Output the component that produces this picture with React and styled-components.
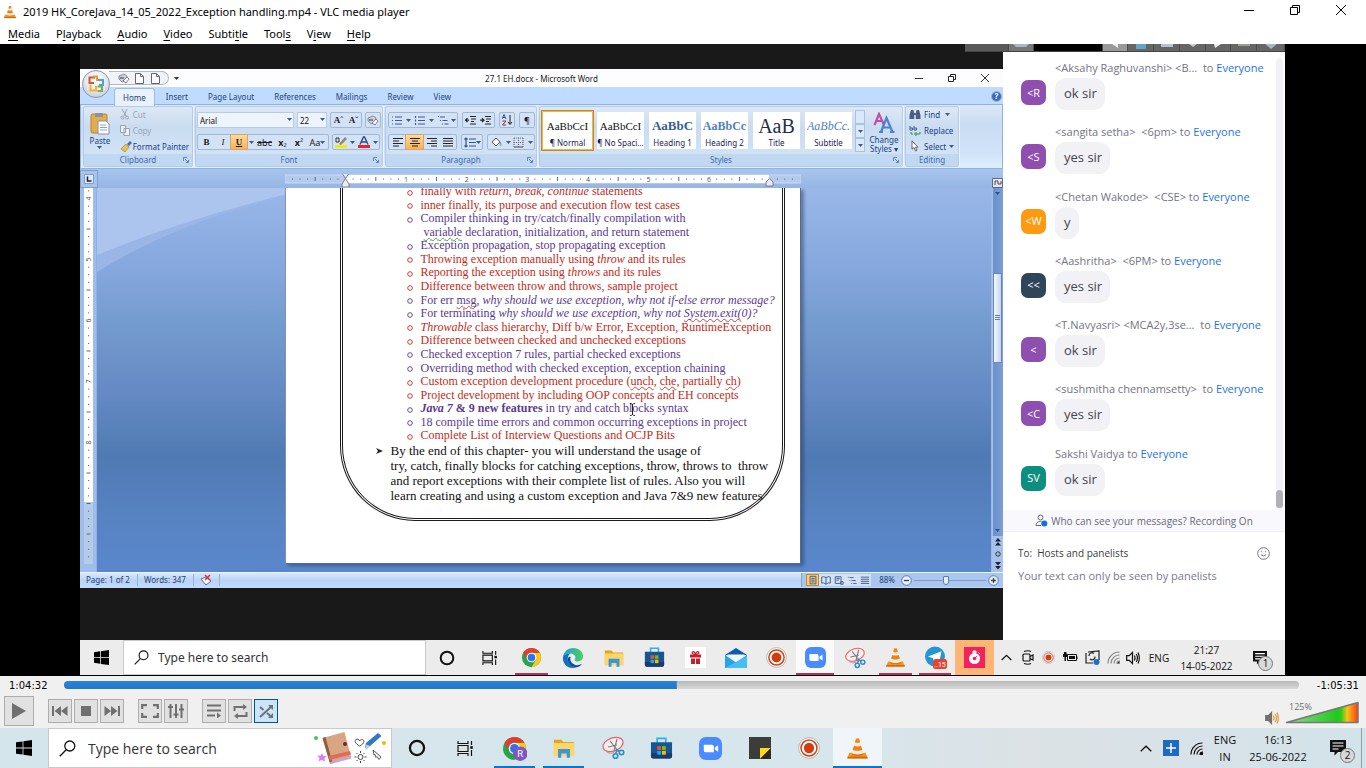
import React from 'react';
import styled, { createGlobalStyle, css } from 'styled-components';

const UI = '"Open Sans", "Noto Sans", sans-serif';
const WIDE_UI = '"Noto Sans", "Open Sans", sans-serif';
const SERIF = '"Liberation Serif", "Times New Roman", serif';
const PLAYED = 3872;
const DURATION = 7803;

const Global = createGlobalStyle`
  *, *::before, *::after { box-sizing: border-box; }
  html, body { margin: 0; padding: 0; }
  body { font-family: ${UI}; color: #000; background: #000; }
  button, input, select, textarea { font: inherit; color: inherit; margin: 0; padding: 0; border: 0; background: none; border-radius: 0; }
  button { display: inline-flex; align-items: center; justify-content: center; }
  h1, p, ul, ol { margin: 0; padding: 0; font: inherit; list-style: none; }
  a { text-decoration: none; color: inherit; }
  svg { display: block; flex: none; }
`;

/* ---------- Shell ---------- */
const Shell = styled.div`
  display: flex; flex-direction: column; min-height: 100vh;
`;
const TitleBar = styled.header`
  display: flex; align-items: center; height: 23px; padding: 0 2px 0 3px; gap: 6px; background: #fff; font-family: ${WIDE_UI}; font-size: 11px;
`;
const AppTitle = styled.h1`flex: 1; white-space: nowrap;`;
const WindowButton = styled.button`width: 46px; height: 23px; padding-bottom: 4px;`;
const MenuBar = styled.nav`
  display: flex; height: 21px; align-items: center; padding-left: 8px; gap: 16px; background: #fff; font-family: ${WIDE_UI}; font-size: 11px;
  u { text-underline-offset: 2px; }
`;

/* ---------- Video stage ---------- */
const Stage = styled.main`
  flex: 1; display: flex; flex-direction: column; margin: 0 81px 1px 80px; position: relative; background: #191919;
`;
const StageBody = styled.div`flex: 1; display: flex; min-height: 0;`;
const WordColumn = styled.section`
  flex: 1; min-width: 0; display: flex; flex-direction: column; padding: 25px 0 52px; font-family: ${WIDE_UI};
`;
const MeetingStrip = styled.div`
  position: absolute; top: 0; right: 0; height: 8px; width: 320px; display: flex; background: #606060; overflow: hidden;
  border-bottom: 1px solid #444;
`;
const StripCell = styled.div`
  width: ${(p) => p.w}px; background: ${(p) => p.bg || '#666'}; border-right: 1px solid #4c4c4c;
  display: flex; justify-content: center; align-items: flex-start;
`;

/* ---------- Word ---------- */
const WordTitle = styled.div`
  position: relative; display: flex; align-items: center; justify-content: center; height: 18px; background: #fdfdff; font-size: 8px; color: #222;
`;
const WordControls = styled.div`
  position: absolute; right: 2px; top: 0; display: flex;
  button { width: 33px; height: 17px; }
`;
const OfficeButton = styled.button`
  position: absolute; left: 2px; top: 1px; width: 28px; height: 28px; border-radius: 50%; z-index: 2;
  background: radial-gradient(circle at 50% 35%, #fff 0, #e8ecf3 45%, #b6c0d0 100%); border: 1px solid #8b97ab;
`;
const QuickAccess = styled.div`
  position: absolute; left: 29px; top: 2px; height: 14px; width: 60px; padding-left: 8px; display: flex; align-items: center; gap: 3px;
  border: 1px solid #b3b9c6; border-left: 0; border-radius: 0 8px 8px 0; background: #f1f3f8;
  button { width: 13px; height: 12px; }
`;
const QuickMore = styled.button`position: absolute; left: 92px; top: 3px; width: 8px; height: 12px;`;
const TabRow = styled.div`
  display: flex; height: 18px; padding-left: 33px; background: #bfdbff; font-size: 8px; color: #1d4480; border-bottom: 1px solid #8db2e3;
`;
const Tab = styled.button`
  padding: 0 10px; height: 18px; position: relative;
  ${(p) => p.$active && css`background: #e9f1fb; border: 1px solid #9bbce6; border-bottom: 0; border-radius: 3px 3px 0 0; margin: 1px 1px 0; padding: 0 8px;`}
`;
const HelpButton = styled.button`margin-left: auto; width: 14px; height: 18px;`;
const Ribbon = styled.div`
  display: flex; gap: 2px; height: 64px; padding: 1px 2px; background: linear-gradient(#dce8f6, #c9dcf3 30%, #cfe2f7 75%, #dcf0ff);
  border: 1px solid #8db2e3; border-top: 0; font-size: 8px; color: #15428b;
`;
const Group = styled.section`
  width: ${(p) => p.w}px; display: flex; flex-direction: column; border: 1px solid #b4cbe8; border-radius: 2px;
  box-shadow: 1px 0 0 #eef5fd; background: linear-gradient(#dde8f5, #cadcf1 35%, #d5e5f7);
`;
const GroupBody = styled.div`
  flex: 1; display: flex; flex-direction: ${(p) => (p.$col ? 'column' : 'row')}; padding: ${(p) => p.pad || '3px'}; gap: ${(p) => p.gap || 0}px;
`;
const GroupLabel = styled.div`
  height: 12px; line-height: 12px; text-align: center; background: #c0d8f1; color: #3e6aaa; position: relative;
  svg { position: absolute; right: 3px; top: 3px; }
`;
const BigButton = styled.button`
  width: ${(p) => p.w}px; flex-direction: column; line-height: 9px; gap: 1px;
`;
const Stack = styled.div`display: flex; flex-direction: column; justify-content: space-around; flex: 1;`;
const LineButton = styled.button`
  justify-content: flex-start; gap: ${(p) => p.gap || 3}px; height: 15px; white-space: nowrap; color: ${(p) => (p.$dim ? '#98a3b5' : '#15428b')};
`;
const ToolRow = styled.div`display: flex; align-items: center; gap: ${(p) => p.gap || 4}px; height: 16px;`;
const ToolBox = styled.div`
  display: flex; height: 16px; border: 1px solid #9fb9dc; border-radius: 2px; background: #d3e2f4;
`;
const Tool = styled.button`
  flex: none; width: ${(p) => p.w || 16}px; height: 14px; font-size: 9px; color: #1b1b2b; font-family: ${(p) => (p.$serif ? SERIF : 'inherit')};
  ${(p) => p.$on && css`background: linear-gradient(#fcd9a0, #fbb252); outline: 1px solid #d8a768;`}
`;
const Combo = styled.select`
  appearance: none; width: ${(p) => p.w}px; height: 16px; background: #eef4fb; border: 1px solid #b7cbe6; padding-left: 2px; color: #111;
`;
const ComboWrap = styled.label`
  position: relative; display: flex; font-size: 8px;
  svg { position: absolute; right: 2px; top: 6px; }
`;
const StyleCard = styled.button`
  width: ${(p) => (p.$on ? 53 : 47)}px; height: ${(p) => (p.$on ? 41 : 37)}px; flex: none; background: #fff; flex-direction: column; overflow: hidden;
  border: ${(p) => (p.$on ? '2px solid #f0b840' : '0')}; outline: ${(p) => (p.$on ? '1px solid #c28a30' : '0')}; outline-offset: -1px;
  margin: ${(p) => (p.$on ? '0 -2px 0 0' : '2px 0 0')};
`;
const Sample = styled.span`
  height: 24px; line-height: 24px; font-family: ${SERIF}; white-space: nowrap; max-width: 45px; overflow: hidden; flex: none;
  font-size: ${(p) => p.size || 11}px; color: ${(p) => p.c || '#111'}; font-weight: ${(p) => (p.$b ? 700 : 400)}; font-style: ${(p) => (p.$i ? 'italic' : 'normal')};
`;
const StyleName = styled.span`line-height: 10px; color: #1c1c58; white-space: nowrap;`;
const GalleryScroll = styled.div`
  display: flex; flex-direction: column; width: 10px; height: 42px; margin: 0 -2px;
  button { flex: 1; border: 1px solid #a9c1e2; background: #dbe8f7; }
`;

const RulerStrip = styled.div`
  display: flex; align-items: center; height: 19px; background: linear-gradient(#a9c5ee, #96b5e3); flex: none;
`;
const TabStop = styled.button`width: 18px; height: 18px; border: 1px solid #7f9fd0; background: #a9c3ea;`;
const RulerCenter = styled.div`flex: 1; display: flex; justify-content: center; padding: 3px 3px 0 0;`;
const RulerToggle = styled.button`width: 12px; height: 18px; align-items: flex-end;`;

const Workspace = styled.div`flex: 1; display: flex; min-height: 0;`;
const SideRuler = styled.div`
  width: 17px; background: #9fbdec; padding-left: 4px; overflow: hidden; border-right: 1px solid #8fb0e4;
`;
const Canvas = styled.div`
  flex: 1; position: relative; display: flex; justify-content: center; overflow: hidden; padding-right: 3px;
  background: linear-gradient(#9ab7e8, #82a5dc 24%, #769dd0 33%, #6489c3 54%, #507ab3 70%, #5884c4 88%, #5a87cc);
`;
const Swoosh = styled.svg`position: absolute; left: 0; top: 0;`;
const Paper = styled.article`
  position: relative; width: 516px; margin-bottom: 8px; padding: 0 15px 42px 54px; background: #fff; display: flex; flex-direction: column;
  border: 1px solid #5a6b88; border-top: 0; border-left-color: #7f92b4; box-shadow: 3px 2px 3px rgba(30, 50, 90, 0.45);
`;
const Frame = styled.div`
  flex: 1; border: 3px double #1c1c1c; border-top: 0; border-radius: 0 0 75px 75px; font-family: ${SERIF};
`;
const Topics = styled.ul`
  display: grid; grid-template-rows: repeat(19, 1fr); height: 258px; margin-top: -3px; padding-left: 64px; font-size: 12px; line-height: 13px;
`;
const Topic = styled.li`
  display: flex; min-height: 0; color: ${(p) => (p.$red ? '#c62a20' : '#5c3a8c')}; white-space: pre;
`;
const Bullet = styled.span`width: ${(p) => (p.$blank ? 17 : 14)}px; height: 13px; display: flex; align-items: center; padding-top: 2px;`;
const Squiggle = styled.span`text-decoration: underline wavy ${(p) => p.c || '#d04040'} 1px; text-underline-offset: 1px; text-decoration-skip-ink: none;`;
const Closing = styled.div`
  display: flex; padding-left: 33px; font-size: 13px; line-height: 15px; white-space: pre; color: #111;
  svg { margin: 4px 7px 0 0; }
`;
const IBeam = styled.svg`position: absolute; left: 343px; top: 215px;`;

const WordScroll = styled.div`
  width: 12px; background: #a5c1ee; display: flex; flex-direction: column; align-items: center; padding: 0 1px; border-left: 1px solid #9ab8e8;
`;
const WordTrack = styled.div`
  flex: 1; width: 10px; background: linear-gradient(90deg, #6a8fca, #7c9fd6); display: flex; flex-direction: column; justify-content: space-between; align-items: center; padding: 4px 0;
`;
const WordThumb = styled.div`
  width: 9px; height: 90px; margin-bottom: 88px; border: 1px solid #6d87b4; border-radius: 1px; background: linear-gradient(90deg, #f4f8fe, #c4d4ee);
  display: flex; align-items: center; justify-content: center;
`;
const Jump = styled.button`height: 12px; width: 10px;`;
const StatusBar = styled.footer`
  display: flex; align-items: center; height: 16px; flex: none; font-size: 8px; color: #1c3f78; padding: 0 0 1px 6px;
  background: linear-gradient(#d9e8fb, #b9d3f7 50%, #c3dafa); border-top: 1px solid #eaf3ff;
`;
const StatusItem = styled.span`padding-right: 7px; margin-right: 6px; border-right: 1px solid #93b2dd; line-height: 12px;`;
const StatusRight = styled.div`
  margin-left: auto; display: flex; align-items: center; height: 14px; padding: 0 4px; gap: 2px; background: #a9c6ee; border-left: 1px solid #7fa3d6;
`;
const ViewButton = styled.button`
  width: 13px; height: 12px; background: ${(p) => (p.$on ? '#fbc877' : '#d3e2f6')}; border: ${(p) => (p.$on ? '1px solid #c68a33' : '0')};
`;
const ViewGroup = styled.div`display: flex;`;
const ZoomLabel = styled.span`padding: 0 4px 0 6px; line-height: 12px;`;
const ZoomRange = styled.input`
  appearance: none; width: 72px; height: 12px; background: linear-gradient(#7f9cc8, #7f9cc8) center / 100% 1px no-repeat;
  &::-webkit-slider-thumb { appearance: none; width: 6px; height: 9px; background: #e4edf9; border: 1px solid #5b7cae; border-radius: 1px 1px 3px 3px; }
`;

/* ---------- Chat ---------- */
const Chat = styled.aside`
  width: 282px; flex: none; display: flex; flex-direction: column; background: #fff; margin-top: 7px; color: #6e6e7e;
`;
const Feed = styled.div`flex: 1; display: flex; padding: 9px 2px 0 18px; min-height: 0; justify-content: space-between;`;
const Messages = styled.ol`display: grid; grid-auto-rows: 1fr;`;
const Message = styled.li`display: grid; grid-template-columns: 34px auto; grid-template-rows: 17px 33px; white-space: pre;`;
const Sender = styled.p`
  grid-column: 2; font-size: 11px; line-height: 16px; color: #747484;
  a { color: #1b74e4; }
`;
const Avatar = styled.span`
  width: 25px; height: 25px; margin-top: 3px; padding-bottom: 1px; border-radius: 7px; display: flex; align-items: center; justify-content: center; color: #fff; font-size: 11px;
  background: ${(p) => p.bg};
`;
const Bubble = styled.p`
  justify-self: start; height: 32px; margin-top: 1px; padding: 0 8px 0 9px; border-radius: 11px; background: #f1f1f6; color: #44444c; font-size: 13px; line-height: 31px;
`;
const ChatTrack = styled.div`
  width: 7px; margin-top: -2px; border-radius: 4px; background: #f1f1f6; display: flex; align-items: flex-end; padding-bottom: 2px;
`;
const ChatThumb = styled.div`width: 7px; height: 18px; border-radius: 4px; background: #b0b0b8;`;
const Notice = styled.div`
  height: 22px; display: flex; align-items: center; justify-content: center; gap: 3px; background: #f8f8fd; border-bottom: 1px solid #ececf4; font-size: 10px; color: #6a6a78;
`;
const Compose = styled.form`height: 108px; padding: 12px 15px 0; display: flex; flex-direction: column; gap: 6px;`;
const ComposeHead = styled.div`
  display: flex; align-items: center; gap: 5px; height: 18px; font-size: 10px; color: #3b3b46;
  button { margin-left: auto; }
`;
const ComposeText = styled.textarea`
  resize: none; height: 60px; outline: 0; font-size: 11px; line-height: 16px; overflow: hidden;
  &::placeholder { color: #7a7a8a; opacity: 1; }
`;

/* ---------- Recorded taskbar ---------- */
const InnerTaskbar = styled.div`
  height: 35px; flex: none; display: flex; align-items: stretch; background: #ececec; padding-right: 4px;
`;
const Slot = styled.button`
  position: relative; flex: none; width: ${(p) => p.w}px; background: ${(p) => p.bg || 'transparent'};
  &::after { content: ''; display: ${(p) => (p.line ? 'block' : 'none')}; position: absolute; left: ${(p) => p.inset || 0}px; right: ${(p) => p.inset || 0}px; bottom: 0; height: 2px; background: ${(p) => p.line}; }
`;
const SearchBox = styled.label`
  display: flex; align-items: center; gap: ${(p) => p.gap}px; width: ${(p) => p.w}px; padding: 0 4px 0 10px; background: #fff; border: 1px solid #c9c9c9;
  font-family: ${(p) => p.face || UI};
  input { flex: 1; min-width: 0; outline: 0; font-size: ${(p) => p.size}px; }
  input::placeholder { color: #333; opacity: 1; }
`;
const Tray = styled.div`
  margin-left: auto; display: flex; align-items: center; font-size: ${(p) => p.size}px; color: #111; text-align: center; white-space: nowrap;
`;
const TrayItem = styled.button`width: ${(p) => p.w}px; height: 100%; position: relative; flex: none; line-height: ${(p) => p.lh || 16}px;`;
const Badge = styled.span`
  position: absolute; left: ${(p) => p.x}px; top: ${(p) => p.y}px; width: 15px; height: 15px; border-radius: 50%; background: #d9d9d9; border: 1px solid #777;
  font-size: 10px; line-height: 13px; text-align: center;
`;

/* ---------- Player controls ---------- */
const Player = styled.section`height: 52px; flex: none; background: #f0f0f0;`;
const SeekRow = styled.div`
  display: flex; align-items: center; height: 18px; padding: 0 7px 0 9px; font-family: "DejaVu Sans", sans-serif; font-size: 10px;
`;
const Seek = styled.input`
  appearance: none; flex: 1; min-width: 0; height: 8px; margin: 0 18px 0 16px; border-radius: 4px;
  background: linear-gradient(#2a84d8, #2277c8) left / ${(PLAYED / DURATION) * 100}% 100% no-repeat, linear-gradient(#b8b8b8, #d8d8d8);
  &::-webkit-slider-thumb { appearance: none; width: 0; height: 0; }
`;
const ControlRow = styled.div`display: flex; align-items: center; height: 34px; padding: 0 6px 0 4px; gap: 14px;`;
const ControlSet = styled.div`display: flex; gap: 2px;`;
const Control = styled.button`
  width: ${(p) => p.$size || 24}px; height: ${(p) => p.$size || 24}px; background: ${(p) => (p.$on ? '#cce4f7' : '#e1e1e1')}; border: 1px solid ${(p) => (p.$on ? '#005499' : '#adadad')};
`;
const Volume = styled.div`margin-left: auto; display: flex; align-items: flex-end; gap: 6px; position: relative; height: 28px;`;
const VolumeText = styled.span`position: absolute; left: 24px; top: 4px; font-size: 9px; color: #707070; line-height: 12px;`;

/* ---------- Desktop taskbar ---------- */
const Taskbar = styled.footer`
  height: 40px; flex: none; display: flex; align-items: stretch; padding-right: 4px;
  background: linear-gradient(90deg, #d5e5ec, #d6e6ec 60%, #dce2e6 75%, #d3e3ea);
`;
const ShowDesktop = styled.button`width: 1px; height: 40px; background: #8fa2aa;`;

/* ---------- Icons ---------- */
const Cone = ({ s = 24 }) => (
  <svg width={s} height={s} viewBox="0 0 24 24">
    <path d="M3.500 16.500h17l2 5.600h-21z" fill="#f7931a" />
    <path d="M1.500 20.500h21v2h-21z" fill="#d66a00" />
    <path d="M10.400 1.500h3.200L18.500 18c-2 2.500-11 2.500-13 0z" fill="#efeae4" />
    <path d="M10.400 1.500h3.200l1.100 4c-1.200.9-4.200.9-5.400 0z" fill="#f08a12" />
    <path d="M8.300 9c1.900 1.100 5.500 1.100 7.400 0l1.300 4.200c-2.300 1.500-7.700 1.500-10 0z" fill="#ee8110" />
    <path d="M6 16.800c2.800 2 9.200 2 12 0l.5 1.500c-2 2.300-11 2.300-13 0z" fill="#e07407" />
  </svg>
);
const WinLogo = ({ s = 16 }) => (
  <svg width={s} height={s} viewBox="0 0 16 16"><path d="M0 2.300 6.600 1.400v6.200H0zM7.400 1.300 16 0v7.600H7.400zM0 8.400h6.600v6.200L0 13.700zM7.400 8.400H16V16l-8.600-1.200z" /></svg>
);
const Lens = ({ s = 17 }) => (
  <svg width={s} height={s} viewBox="0 0 17 17" fill="none" stroke="#111" strokeWidth="1.300"><circle cx="10.800" cy="6" r="5" /><path d="M7.200 9.700.8 16.200" /></svg>
);
const Ring = ({ s = 16 }) => (
  <svg width={s} height={s} viewBox="0 0 16 16"><circle cx="8" cy="8" r="6.300" fill="none" stroke="#111" strokeWidth="2" /></svg>
);
const TaskView = ({ s = 17 }) => (
  <svg width={s} height={s} viewBox="0 0 17 17" fill="none" stroke="#111" strokeWidth="1.200"><path d="M1 1v2.500h10V1M1 16v-2.500h10V16M1 5.500h10v6H1zM14.500 1v4M14.500 10v6" /><path d="M13.200 6.200h2.600v2.600h-2.600z" fill="#111" stroke="none" /></svg>
);
const Chrome = ({ s = 22, user }) => (
  <svg width={s} height={s} viewBox="0 0 24 24">
    <circle cx="12" cy="12" r="11" fill="#2ba24c" />
    <path d="M12 6.500h9.500A11 11 0 0 1 12 23l4.800-8.200z" fill="#fbc81a" />
    <path d="M2.500 6.500A11 11 0 0 1 21.500 6.500H12a5.500 5.500 0 0 0-4.800 8.200z" fill="#e23e30" />
    <circle cx="12" cy="12" r="5.500" fill="#fff" /><circle cx="12" cy="12" r="4.300" fill="#2c74e8" />
    {user && <><circle cx="17.500" cy="17" r="7" fill="#7e57c2" /><text x="17.500" y="20.300" fontSize="9" fill="#fff" textAnchor="middle" fontFamily="Roboto">R</text></>}
  </svg>
);
const Edge = () => (
  <svg width="22" height="22" viewBox="0 0 24 24">
    <defs><linearGradient id="eg" x1="0" x2="1"><stop offset="0" stopColor="#1b9de2" /><stop offset="1" stopColor="#4fd05a" /></linearGradient></defs>
    <path d="M1 11C2 4.500 7 1 12.500 1 18.500 1 23 5.300 23 10.200c0 3.400-2.600 5.600-5.700 5.600-2.300 0-3.500-.9-3.500-1.700 0-.7.900-1.100.9-2.800C14.700 9 12 7 8.800 7 5.500 7 2.600 8.700 1 11z" fill="url(#eg)" />
    <path d="M1 11C2.600 8 6.500 6.600 9.500 7.200 6.500 8.500 6 12 6.500 14.500c.8 4 4.600 7.600 9.500 7.300C14.500 22.700 13 23 11.500 23 5.500 23 .5 18 1 11z" fill="#0f6fc6" />
    <path d="M9.500 11c-1.500 3 .5 7.500 5 8.600 2.500.6 5.500 0 7.300-1.300-1 2-3.300 3.500-5.800 3.700-5 .3-9-3.500-9.600-7.500-.3-2.500 1-4.500 3.100-3.500z" fill="#0b4a94" />
  </svg>
);
const Folder = ({ s = 22 }) => (
  <svg width={s} height={s} viewBox="0 0 24 24"><path d="M1 3h8l2 2.500h12V20H1z" fill="#e6a417" /><path d="M1 6.500h22V21H1z" fill="#fcd667" /><path d="M5.500 13h13v9.500h-3.500V18H9v4.500H5.500z" fill="#3b95d9" /></svg>
);
const Store = ({ s = 22 }) => (
  <svg width={s} height={s} viewBox="0 0 24 24"><path d="M7.500 6V1.500h9V6" fill="none" stroke="#28b1ec" strokeWidth="1.800" /><path d="M1 5.500h22V20a2.500 2.500 0 0 1-2.500 2.500h-17A2.500 2.500 0 0 1 1 20z" fill="#175595" /><path d="M1 17h22v3a2.500 2.500 0 0 1-2.500 2.500h-17A2.500 2.500 0 0 1 1 20z" fill="#1a3c6b" /><path d="M7.500 9.500h4v4h-4z" fill="#f25022" /><path d="M12.500 9.500h4v4h-4z" fill="#7fba00" /><path d="M7.500 14.500h4v4h-4z" fill="#19a7ee" /><path d="M12.500 14.500h4v4h-4z" fill="#ffb900" /></svg>
);
const Gift = () => (
  <svg width="21" height="21" viewBox="0 0 21 21"><path fill="#fff" d="M0 0h21v21H0z" /><path d="M5 7.500h11v3H5zM6 11.500h4V17H6zM11 11.500h4V17h-4z" fill="#c2202b" /><path d="M10.500 7.500C8 7.500 6.500 6 7.500 5s2.500 0 3 2.500c.5-2.500 2-3.500 3-2.500s-.5 2.500-3 2.500z" fill="none" stroke="#c2202b" strokeWidth="1.300" /></svg>
);
const Mail = () => (
  <svg width="22" height="20" viewBox="0 0 22 20"><path d="M0 7 11 0l11 7z" fill="#0c5fae" /><path d="M2.500 6.500h17L11 14z" fill="#f4f8fb" /><path d="M0 7l11 7.500L22 7v13H0z" fill="#28a3e8" /><path d="M0 20 22 8v12z" fill="#47bdf5" /></svg>
);
const Rec = ({ s = 22 }) => (
  <svg width={s} height={s} viewBox="0 0 24 24"><circle cx="12" cy="12" r="11.300" fill="#fff" stroke="#ab9a92" strokeWidth=".8" /><circle cx="12" cy="12" r="8.700" fill="none" stroke="#c34a20" strokeWidth="1.700" /><circle cx="12" cy="12" r="5.600" fill="#d13d10" /></svg>
);
const Zoom = ({ s = 22 }) => (
  <svg width={s} height={s} viewBox="0 0 24 24"><rect width="24" height="24" rx="7" fill="#4a8cff" /><path d="M5 8h8.500a2 2 0 0 1 2 2v6H7a2 2 0 0 1-2-2zM16.500 11l3.500-2.500v7L16.500 13z" fill="#fff" /></svg>
);
const Snip = ({ s = 24 }) => (
  <svg width={s} height={s} viewBox="0 0 24 24" fill="none"><ellipse cx="12" cy="8.500" rx="10.500" ry="6.500" transform="rotate(-20 12 8.500)" stroke="#e06666" strokeWidth="1.200" fill="#f7eeee" /><path d="M4 14c2 3 6 4 9 2.500" stroke="#d98080" /><path d="m9 5 8 10M16 3l-3 12M7 11l9-2" stroke="#7d7d86" strokeWidth="1.200" /><circle cx="14.500" cy="20" r="2.300" stroke="#2c8bc8" strokeWidth="1.600" /><circle cx="20.500" cy="16.500" r="2.200" stroke="#2c8bc8" strokeWidth="1.600" /><path d="m14.800 17.500 1-3.500 3 1.500" stroke="#2c8bc8" strokeWidth="1.600" /></svg>
);
const Telegram = () => (
  <svg width="23" height="23" viewBox="0 0 23 23"><circle cx="11" cy="10.500" r="10" fill="#2596d4" /><path d="m4 10.500 13.500-5.300-2.300 11-3.700-2.600-2 1.900-.5-3.200z" fill="#fff" /><rect x="9" y="13" width="14" height="10" rx="2.500" fill="#e8432e" /><text x="16" y="20.800" fontSize="7" fill="#fff" textAnchor="middle" fontFamily="Roboto">..15</text></svg>
);
const PinkClock = () => (
  <svg width="21" height="21" viewBox="0 0 21 21"><path d="M0 0h21v21H0z" fill="#f5205f" /><circle cx="10.500" cy="11.500" r="5.500" fill="#fff" /><path d="M9 4h3v2H9zM14.500 5.500l1.500 1.500" fill="#fff" stroke="#fff" /><circle cx="10.500" cy="11.500" r="1.800" fill="#f5205f" /><path d="m10.500 11.500 2.700-2.500" stroke="#f5205f" /></svg>
);
const Note = () => (
  <svg width="22" height="22" viewBox="0 0 22 22"><path d="M0 0h22v22H0z" fill="#3c3c3a" /><path d="M11 11h11L11 22z" fill="#ffd91a" /><path d="M22 11v11H11z" fill="#2a2a28" /></svg>
);
const Chevron = ({ s = 12 }) => (
  <svg width={s} height="7" viewBox="0 0 12 7" fill="none" stroke="#111" strokeWidth="1.300"><path d="m.7 6.200 5.300-5 5.300 5" /></svg>
);
const Wifi = ({ c = '#111' }) => (
  <svg width="13" height="13" viewBox="0 0 13 13" fill="none" stroke={c} strokeWidth="1.200"><path d="M1 12.500C1 6 6 1 12.500 1M4 12.500C4 7.500 8 4 12.500 4M7 12.500C7 9.500 9.500 7 12.500 7" /><path d="M10 12.500C10 11 11 10 12.500 10v2.500z" fill="#111" /></svg>
);
const Speech = ({ s = 16 }) => (
  <svg width={s} height={s} viewBox="0 0 16 16"><path d="M0 0h16v12h-8l-3.500 3.500V12H0z" fill="#111" /><path d="M2.500 3h11M2.500 6h11M2.500 9h6" stroke="#fff" strokeWidth="1.200" /></svg>
);
const Speaker = ({ c = '#111', w = '#111' }) => (
  <svg width="14" height="14" viewBox="0 0 14 14" fill="none" stroke={w} strokeWidth="1.200"><path d="M.7 4.700h2.500L6.500 1.500v11L3.200 9.300H.7z" stroke={c} fill={c === '#111' ? 'none' : c} /><path d="M8.300 4.500q1.500 2.500 0 5M10.200 3q2.500 4 0 8M12 1.500q2.600 5.500 0 11" /></svg>
);
const Camera = () => (
  <svg width="12" height="15" viewBox="0 0 12 15" fill="none" stroke="#111" strokeWidth="1.200"><rect x="1" y="4" width="7" height="7" rx="1" /><path d="m8 6.500 3-1.500v5L8 8.500M2 1.500q4-1.500 7 0M2 13.500q4 1.500 7 0" /></svg>
);
const Battery = () => (
  <svg width="15" height="11" viewBox="0 0 15 11"><path d="M4.500 2.500h9v6h-9zM14 4.500v2.500" fill="none" stroke="#111" /><path d="M6 4h6v3H6zM1 0v2H0v3h1.500v4H3V5h1.500V2H3.500V0z" fill="#111" /></svg>
);
const Sync = () => (
  <svg width="15" height="15" viewBox="0 0 15 15" fill="none" stroke="#222" strokeWidth="1.200"><path d="M3 2 14 1v9M1 3v10h7" /><path d="M9 3.500a3 3 0 0 0-5 2.500M5 9a3 3 0 0 0 5-2.500" /><circle cx="11.500" cy="12" r="3" fill="#1e6fd0" stroke="none" /></svg>
);
const Notebook = () => (
  <svg width="74" height="34" viewBox="0 0 74 34">
    <circle cx="3" cy="7" r="2" fill="#43c463" /><circle cx="71" cy="12" r="2" fill="#fbb40f" />
    <path d="M9 22l1.300 3 3.500.2-2.400 2.100.5 3.200L9 29l-3.300 1.300.8-3.200-2.300-2.300 3.500-.2z" fill="#df7df0" />
    <path d="m9.500 7 22-6 6.500 25-21 6.500z" fill="#d9a684" /><path d="m9.500 7 3-1 7 26-2.500.5z" fill="#8f5d41" /><path d="m15.500 25 21.500-5 1 3.500L16.500 29z" fill="#e06b5c" /><path d="m17 31 21-5.500.5 2L18 33z" fill="#c9a0e4" /><circle cx="32" cy="13" r="2" fill="#6b2f1f" />
    <path d="m52 17 1-5L65 2l3.500 3L57 15z" fill="#2f78c8" /><path d="m52.500 19.500.5-6 4.500 1.500z" fill="#c3cfdb" />
    <path d="M46.500 15c-4-2.500-5.500-5-3.500-6.500 1.500-1 3 0 3.500 1.500 1-1.500 3-2 4-.7 1.300 1.700-.5 4-4 5.700z" fill="#fff" stroke="#444" />
    <circle cx="47.500" cy="26" r="2.500" fill="none" stroke="#444" /><path d="M47.500 20v2M47.500 30v2M41.500 26h2M51.500 26h2M43.500 22l1 1M51.500 22l-1 1M43.500 30l1-1M51.500 30l-1-1" stroke="#444" />
    <path d="m60 19 8 7-2 2.500-2-3-1 1-1-3-1 .5z" fill="#fff" stroke="#555" />
  </svg>
);
const Arrow = ({ c = '#3a5a8c' }) => <svg width="5" height="3" viewBox="0 0 5 3"><path d="M0 0h5L2.500 3z" fill={c} /></svg>;
const Launcher = () => <svg width="6" height="6" viewBox="0 0 6 6" fill="none" stroke="#6585b5"><path d="M.5 4V.5H4M2 2l3.500 3.500M5.500 3v2.500H3" /></svg>;
const LinesIcon = ({ kind, c = '#222', w = 12 }) => {
  const paths = {
    bullets: 'M4 2h7M4 5.500h7M4 9h7M1 2h1M1 5.500h1M1 9h1',
    numbers: 'M4 2h7M4 5.500h7M4 9h7M1.500 1v2M1.500 4.500v2M1.500 8v2',
    multi: 'M1 1.500h1M3 2h5M3 5.500h1M5.500 5.500h5M5 9h1M7.500 9h4',
    left: 'M1 1.500h10M1 4h6M1 6.500h10M1 9h6',
    center: 'M1 1.500h10M3 4h6M1 6.500h10M3 9h6',
    right: 'M1 1.500h10M5 4h6M1 6.500h10M5 9h6',
    justify: 'M1 1.500h10M1 4h10M1 6.500h10M1 9h10',
    outdent: 'M5 1.500h6M6 4h5M6 6.500h3M5 9h6M4 5.200H.5M2.500 3.200l-2 2 2 2',
    indent: 'M5 1.500h6M6 4h5M6 6.500h3M5 9h6M0 5.200h3.500M2 3.200l2 2-2 2',
    spacing: 'M5 2h7M5 5.500h7M5 9h7M2 1v9M.5 2.500 2 1l1.500 1.500M.5 8.500 2 10l1.500-1.500',
    borders: 'M1 1h9M1 5.500h9M5.500 1v9M1 1v9M10 1v9',
    page: 'M2.500.500h7v9h-7zM4 3h4M4 5h4M4 7h4',
    book: 'M6 2v8M6 2Q3 0 .8 1.500v7Q3 7.500 6 10M6 2q3-2 5.200-.5v7Q9 7.500 6 10',
    web: 'M1.500 1h7v8h-7zM3 3h4M3 5h3M8 7h3v3H8z',
  };
  return <svg width={w} height="11" viewBox="0 0 12 11" fill="none" stroke={c} strokeWidth="1.200" strokeDasharray={kind === 'borders' ? '1 1' : undefined}><path d={paths[kind]} />{kind === 'borders' && <path d="M1 10h9" strokeDasharray="none" />}</svg>;
};
const OfficeLogo = () => (
  <svg width="18" height="18" viewBox="0 0 18 18" fill="none" strokeWidth="2"><path d="M8 2.500H2.500V8H7" stroke="#d9532a" /><path d="M5.500 1.500H10V6" stroke="#f09a2c" /><path d="M11 5h5v5h-4" stroke="#5a9ae0" /><path d="M3.500 10v5.500H9V11" stroke="#f2b42e" /><path d="M10.500 16H15v-4.500h-4.500" stroke="#78b24a" /></svg>
);
const Spell = () => <svg width="12" height="11" viewBox="0 0 12 11"><path d="M1 3 6 1l3 2-1 4-4 2-3-3z" fill="#ccd2de" stroke="#667" strokeWidth=".7" /><path d="m5 8 4-4 2 2-3 4z" fill="#f7f7f7" stroke="#556" strokeWidth=".7" /><path d="M2 5h4" stroke="#334" /></svg>;
const Doc = () => <svg width="9" height="11" viewBox="0 0 9 11"><path d="M.5.500h5l3 3v7h-8z" fill="#fff" stroke="#667" /><path d="M5.500.5v3h3" fill="none" stroke="#667" /></svg>;
const PasteIcon = () => <svg width="20" height="23" viewBox="0 0 20 23"><rect x="1" y="2" width="16" height="19" rx="1.500" fill="#e6ac4c" stroke="#b98330" /><path d="M5 1h8v4H5z" fill="#8c93a0" /><path d="M8 9h8l3 3v10H8z" fill="#fff" stroke="#8592ad" /><path d="M10 13h6M10 15.500h7M10 18h7" stroke="#8ba3cc" /></svg>;
const Scissors = () => <svg width="10" height="11" viewBox="0 0 10 11" fill="none" stroke="#98a3b5"><path d="m2 0 4 7M7 0 4 7" /><circle cx="2.500" cy="8.500" r="1.500" /><circle cx="7" cy="8.500" r="1.500" /></svg>;
const CopyIcon = () => <svg width="10" height="11" viewBox="0 0 10 11" fill="#eef2f8" stroke="#98a3b5"><path d="M.5.500h5v7h-5zM4 3.500h5.500v7H4z" /></svg>;
const Brush = () => <svg width="12" height="11" viewBox="0 0 12 11"><path d="m7 3 3-3 2 2-3 3z" fill="#4a6ea8" /><path d="M1 8 6 3l3 3-4 5z" fill="#e9c14e" stroke="#9a7b25" strokeWidth=".6" /></svg>;
const ChangeA = () => <svg width="22" height="22" viewBox="0 0 22 22" fill="none" strokeWidth="2.200"><path d="M1.500 13 6 2l5 11M3.500 9h6" stroke="#c1509c" /><path d="m8 20 5.500-14L19.500 20M10 15.500h8M6 20h4M17 20h4.500" stroke="#4a83cf" /></svg>;
const Binoc = () => <svg width="12" height="11" viewBox="0 0 12 11" fill="#4b5f86"><path d="M2 1h2.500l.7 4v5H.5V6zM7.500 1H10l1.500 5v4H6.800V5zM5 4h2v2H5z" /></svg>;
const Swap = () => <svg width="12" height="11" viewBox="0 0 12 11" fill="none" stroke="#44608f"><path d="M1 1v4h2.500V3H1M5 1v4h2.500V3H5" /><path d="M6 10V8h2v2zM10 10V8h2M2 7v2h2" stroke="#3c9142" /></svg>;
const Pointer = () => <svg width="12" height="12" viewBox="0 0 12 12"><path d="M3 .8v8.400l2-1.700L6.500 11 8 10.300 6.500 7.200H9z" fill="#fff" stroke="#445" strokeWidth=".8" /></svg>;
const Person = () => (
  <svg width="13" height="13" viewBox="0 0 13 13"><circle cx="5.500" cy="3.500" r="2.500" fill="none" stroke="#6a6a78" /><path d="M1 11.500q0-4 4.500-4h1M1 11.500h5" fill="none" stroke="#6a6a78" /><circle cx="9.300" cy="9.500" r="3" fill="#0e71eb" /></svg>
);
const Smile = () => (
  <svg width="13" height="13" viewBox="0 0 13 13" fill="none" stroke="#747487"><circle cx="6.500" cy="6.500" r="5.800" /><path d="M3.800 7.500q2.700 3 5.400 0" /><path d="M4.500 4.300v1M8.500 4.300v1" strokeWidth="1.300" /></svg>
);

const HorizontalRuler = () => {
  const step = 60.6;
  const marks = [];
  for (let i = -7; i <= 59; i += 1) {
    const x = 60.5 + (i * step) / 8;
    if (x < 2 || x > 512 || i === 0) continue;
    if (i % 8 === 0 && i / 8 < 7) marks.push(<text key={i} x={x} y="8" fontSize="7" fill="#555" textAnchor="middle" fontFamily="Open Sans">{i / 8}</text>);
    else if (i % 8 === 0) continue;
    else if (i % 4 === 0) marks.push(<path key={i} d={`M${x} 3v4`} stroke="#667" strokeWidth="1" />);
    else marks.push(<path key={i} d={`M${x} 4.500v1.200`} stroke="#667" strokeWidth="1" />);
  }
  return (
    <svg width="516" height="13" viewBox="0 0 516 13">
      <path d="M0 1h516v8H0z" fill="#b4cbec" stroke="#c8daf5" /><path d="M60 1h424v8H60z" fill="#fff" />
      {marks}
      <path d="M57 -1h7l-3.500 5.500L64 10v3h-7v-3l3.500-5.500z" fill="#e8ecf3" stroke="#667" strokeWidth=".8" />
      <path d="M481 12V8l3.500-3.500L488 8v4z" fill="#e8ecf3" stroke="#667" strokeWidth=".8" />
    </svg>
  );
};
const VerticalRuler = () => {
  const marks = [];
  for (let i = -1; i <= 48; i += 1) {
    const y = 10.500 + (i * 61) / 8;
    if (y < 2) continue;
    if (i % 8 === 0 && i / 8 < 5) marks.push(<text key={i} x="4.500" y={y + 2.500} fontSize="7" fill="#555" textAnchor="middle" fontFamily="Open Sans" transform={`rotate(-90 4.500 ${y})`}>{4 + i / 8}</text>);
    else if (i % 4 === 0) marks.push(<path key={i} d={`M2.500 ${y}h4`} stroke="#667" />);
    else marks.push(<path key={i} d={`M4 ${y}h1.200`} stroke="#667" />);
  }
  return (
    <svg width="9" height="376" viewBox="0 0 9 376"><path d="M0 0h9v376H0z" fill="#b4cbec" /><path d="M0 0h9v314H0z" fill="#fff" />{marks}</svg>
  );
};

/* ---------- Data ---------- */
const menus = [['', 'M', 'edia'], ['P', 'l', 'ayback'], ['', 'A', 'udio'], ['', 'V', 'ideo'], ['Subti', 't', 'le'], ['Tool', 's', ''], ['V', 'i', 'ew'], ['', 'H', 'elp']];
const topics = [
  [1, <>finally with <i>return, break, continue</i> statements</>],
  [1, 'inner finally, its purpose and execution flow test cases'],
  [0, 'Compiler thinking in try/catch/finally compilation with'],
  [0, <><Squiggle c="#4a9a4a">variable</Squiggle> declaration, initialization, and return statement</>, true],
  [0, 'Exception propagation, stop propagating exception'],
  [1, <>Throwing exception manually using <i>throw</i> and its rules</>],
  [1, <>Reporting the exception using <i>throws</i> and its rules</>],
  [1, 'Difference between throw and throws, sample project'],
  [0, <>For err <Squiggle>msg</Squiggle>, <i>why should we use exception, why not if-else error message?</i></>],
  [0, <>For terminating <i>why should we use exception, why not <Squiggle>System.exit(</Squiggle>0)?</i></>],
  [1, <><i>Throwable</i> class hierarchy, Diff b/w Error, Exception, RuntimeException</>],
  [1, 'Difference between checked and unchecked exceptions'],
  [0, 'Checked exception 7 rules, partial checked exceptions'],
  [0, 'Overriding method with checked exception, exception chaining'],
  [1, <>Custom exception development procedure (<Squiggle>unch</Squiggle>, <Squiggle>che</Squiggle>, partially <Squiggle>ch</Squiggle>)</>],
  [1, 'Project development by including OOP concepts and EH concepts'],
  [0, <><b><i>Java 7</i> &amp; 9 new features</b> in try and catch blocks syntax</>],
  [0, '18 compile time errors and common occurring exceptions in project'],
  [1, 'Complete List of Interview Questions and OCJP Bits'],
];
const chat = [
  ['<R', '#8e4fae', '<Aksahy Raghuvanshi> <B...  to ', 'ok sir'],
  ['<S', '#8e4fae', '<sangita setha>  <6pm> to ', 'yes sir'],
  ['<W', '#fd9a0f', '<Chetan Wakode>  <CSE> to ', 'y'],
  ['<<', '#2f455c', '<Aashritha>  <6PM> to ', 'yes sir'],
  ['<', '#8e4fae', '<T.Navyasri> <MCA2y,3se...  to ', 'ok sir'],
  ['<C', '#8e4fae', '<sushmitha chennamsetty>  to ', 'yes sir'],
  ['SV', '#0c8f80', 'Sakshi Vaidya to ', 'ok sir'],
];
const styleCards = [
  { name: '¶ Normal', text: 'AaBbCcI', on: true },
  { name: '¶ No Spaci...', text: 'AaBbCcI' },
  { name: 'Heading 1', text: 'AaBbC', c: '#365f91', b: true, size: 13 },
  { name: 'Heading 2', text: 'AaBbCc', c: '#4f81bd', b: true, size: 12 },
  { name: 'Title', text: 'AaB', size: 20, c: '#1f2f48' },
  { name: 'Subtitle', text: 'AaBbCc.', c: '#4f81bd', i: true, size: 12 },
];

const WordRibbon = () => (
  <Ribbon>
    <Group w={110}>
      <GroupBody pad="0 3px" gap={7}>
        <BigButton w={30}><PasteIcon />Paste<Arrow /></BigButton>
        <Stack>
          <LineButton $dim><Scissors />Cut</LineButton>
          <LineButton $dim><CopyIcon />Copy</LineButton>
          <LineButton gap={1}><Brush />Format Painter</LineButton>
        </Stack>
      </GroupBody>
      <GroupLabel>Clipboard<Launcher /></GroupLabel>
    </Group>
    <Group w={188}>
      <GroupBody $col pad="5px 1px 0" gap={6}>
        <ToolRow gap={3}>
          <ComboWrap><Combo w={97} aria-label="Font"><option>Arial</option></Combo><Arrow /></ComboWrap>
          <ComboWrap><Combo w={30} aria-label="Font size"><option>22</option></Combo><Arrow /></ComboWrap>
          <ToolBox><Tool w={15} $serif><b>A</b>ˆ</Tool><Tool w={15} $serif><b>A</b>ˇ</Tool></ToolBox>
          <ToolBox><Tool w={14}><Spell /></Tool></ToolBox>
        </ToolRow>
        <ToolRow gap={3}>
          <ToolBox>
            <Tool w={17} $serif><b>B</b></Tool><Tool w={16} $serif><i>I</i></Tool><Tool w={16} $on $serif><b><u>U</u></b></Tool><Tool w={8}><Arrow /></Tool>
            <Tool w={19}><s>abc</s></Tool><Tool w={17}><b>x</b>₂</Tool><Tool w={16}><b>x</b>²</Tool><Tool w={21}>Aa<Arrow /></Tool>
          </ToolBox>
          <ToolBox>
            <Tool w={15}><svg width="12" height="12" viewBox="0 0 12 12"><path d="M0 9h12v3H0z" fill="#f2ea18" /><path d="m4 8 6-7 2 2-6 6z" fill="#8f8a6a" /><path d="M1 2h3v4H1z" fill="none" stroke="#333" /></svg></Tool><Tool w={8}><Arrow /></Tool>
            <Tool w={15}><svg width="12" height="12" viewBox="0 0 12 12"><path d="M0 9h12v3H0z" fill="#ee2222" /><path d="M2 8.500 5.500 1h1L10 8.500M3.500 6h5" fill="none" stroke="#274a86" strokeWidth="1.400" /></svg></Tool><Tool w={8}><Arrow /></Tool>
          </ToolBox>
        </ToolRow>
      </GroupBody>
      <GroupLabel>Font<Launcher /></GroupLabel>
    </Group>
    <Group w={152}>
      <GroupBody $col pad="5px 2px 0" gap={6}>
        <ToolRow>
          <ToolBox><Tool w={15}><LinesIcon kind="bullets" c="#3f5c91" /></Tool><Tool w={8}><Arrow /></Tool><Tool w={15}><LinesIcon kind="numbers" c="#3f5c91" /></Tool><Tool w={8}><Arrow /></Tool><Tool w={15}><LinesIcon kind="multi" c="#3f5c91" /></Tool><Tool w={7}><Arrow /></Tool></ToolBox>
          <ToolBox><Tool w={15}><LinesIcon kind="outdent" /></Tool><Tool w={16}><LinesIcon kind="indent" /></Tool></ToolBox>
          <ToolBox><Tool w={14}><svg width="11" height="12" viewBox="0 0 11 12" fill="none"><path d="m0 5 2-4.500L4 5M.8 3.500h2.500" stroke="#2a56b0" /><path d="M.5 7H4L.5 11H4" stroke="#9a3030" /><path d="M8 1v9M6 8l2 2.500L10 8" stroke="#222" /></svg></Tool></ToolBox>
          <ToolBox><Tool w={14}>¶</Tool></ToolBox>
        </ToolRow>
        <ToolRow>
          <ToolBox><Tool w={17}><LinesIcon kind="left" /></Tool><Tool w={17} $on><LinesIcon kind="center" /></Tool><Tool w={17}><LinesIcon kind="right" /></Tool><Tool w={16}><LinesIcon kind="justify" /></Tool></ToolBox>
          <ToolBox><Tool w={20}><LinesIcon kind="spacing" c="#34558f" /><Arrow /></Tool></ToolBox>
          <ToolBox><Tool w={16}><svg width="12" height="12" viewBox="0 0 12 12"><path d="m2 6 4-4 4 4-4 4z" fill="#fff" stroke="#556" /><path d="M10 6q2 3 0 4" stroke="#4a7ac0" fill="none" /></svg></Tool><Tool w={8}><Arrow /></Tool><Tool w={14}><LinesIcon kind="borders" c="#667" /></Tool><Tool w={8}><Arrow /></Tool></ToolBox>
        </ToolRow>
      </GroupBody>
      <GroupLabel>Paragraph<Launcher /></GroupLabel>
    </Group>
    <Group w={364}>
      <GroupBody pad="3px 1px 0" gap={5}>
        {styleCards.map((s) => (
          <StyleCard key={s.name} $on={s.on}>
            <Sample size={s.size} c={s.c} $b={s.b} $i={s.i}>{s.text}</Sample>
            <StyleName>{s.name}</StyleName>
          </StyleCard>
        ))}
        <GalleryScroll><button aria-label="Up" /><button aria-label="Down"><Arrow /></button><button aria-label="More"><Arrow /></button></GalleryScroll>
        <BigButton w={32}><ChangeA /><span>Change Styles&nbsp;▾</span></BigButton>
      </GroupBody>
      <GroupLabel>Styles<Launcher /></GroupLabel>
    </Group>
    <Group w={54}>
      <GroupBody pad="0 3px">
        <Stack>
          <LineButton><Binoc />Find&nbsp;<Arrow /></LineButton>
          <LineButton><Swap />Replace</LineButton>
          <LineButton><Pointer />Select <Arrow /></LineButton>
        </Stack>
      </GroupBody>
      <GroupLabel>Editing</GroupLabel>
    </Group>
  </Ribbon>
);

const Word = () => (
  <WordColumn>
    <WordTitle>
      <OfficeButton aria-label="Office"><OfficeLogo /></OfficeButton>
      <QuickAccess><button aria-label="Spelling"><Spell /></button><button aria-label="New"><Doc /></button><button aria-label="Open"><Doc /></button></QuickAccess>
      <QuickMore aria-label="Customize"><Arrow c="#333" /></QuickMore>
      27.1 EH.docx - Microsoft Word
      <WordControls>
        <button aria-label="Minimize"><svg width="8" height="8"><path d="M0 4.500h8" stroke="#333" /></svg></button>
        <button aria-label="Restore"><svg width="8" height="8" fill="none" stroke="#222"><path d="M.5 2.500h5v5h-5zM2.500 2V.5h5v5H6" /></svg></button>
        <button aria-label="Close"><svg width="8" height="8" stroke="#333"><path d="m0 0 8 8M8 0 0 8" /></svg></button>
      </WordControls>
    </WordTitle>
    <TabRow>
      <Tab $active>Home</Tab>
      {['Insert', 'Page Layout', 'References', 'Mailings', 'Review', 'View'].map((t) => <Tab key={t}>{t}</Tab>)}
      <HelpButton aria-label="Help"><svg width="11" height="11" viewBox="0 0 11 11"><circle cx="5.500" cy="5.500" r="5" fill="#3a6ab8" stroke="#9fb8e0" /><text x="5.500" y="8.300" fontSize="8" fontWeight="700" fill="#fff" textAnchor="middle">?</text></svg></HelpButton>
    </TabRow>
    <WordRibbon />
    <RulerStrip>
      <TabStop aria-label="Tab stop"><svg width="10" height="10"><path d="M.5.500h9v9h-9z" fill="#dce8f8" stroke="#7f9fd0" /><path d="M3.500 2.500v4.500h4" stroke="#222" strokeWidth="1.500" fill="none" /></svg></TabStop>
      <RulerCenter><HorizontalRuler /></RulerCenter>
      <RulerToggle aria-label="View ruler"><svg width="11" height="10"><path d="M.5.500h10v9H.5z" fill="#e3e9f4" stroke="#667" /><path d="M3 7V3h3v3h3V3" fill="none" stroke="#445" /></svg></RulerToggle>
    </RulerStrip>
    <Workspace>
      <SideRuler><VerticalRuler /></SideRuler>
      <Canvas>
        <Swoosh width="190" height="90" viewBox="0 0 190 90">
          <path d="M0 0h190v8Q80 34 0 84z" fill="#9ab6e6" /><path d="M0 0h190v6Q85 32 0 67z" fill="#abc5ef" />
        </Swoosh>
        <Paper>
          <Frame>
            <Topics>
              {topics.map(([red, text, cont], i) => (
                <Topic key={i} $red={red}>
                  <Bullet $blank={cont}>{!cont && <svg width="6" height="6"><circle cx="3" cy="3" r="2.300" fill="none" stroke="currentColor" strokeWidth=".9" /></svg>}</Bullet>
                  <span>{text}</span>
                </Topic>
              ))}
            </Topics>
            <Closing>
              <svg width="8" height="8" viewBox="0 0 8 8"><path d="m0 1 7 3-7 3 2-3z" fill="#222" /></svg>
              <p>{'By the end of this chapter- you will understand the usage of\ntry, catch, finally blocks for catching exceptions, throw, throws to  throw\nand report exceptions with their complete list of rules. Also you will\nlearn creating and using a custom exception and Java 7&9 new features'}</p>
            </Closing>
          </Frame>
          <IBeam width="7" height="13" viewBox="0 0 7 13"><path d="M1 .5q2 0 2.500 1Q4 .5 6 .5M3.500 1v11M1 12.500q2 0 2.500-1 .5 1 2.500 1" fill="none" stroke="#222" /></IBeam>
        </Paper>
      </Canvas>
      <WordScroll>
        <WordTrack><Arrow c="#33528a" /><WordThumb><svg width="5" height="6"><path d="M0 .5h5M0 2.500h5M0 4.500h5" stroke="#667ea8" /></svg></WordThumb><Arrow c="#33528a" /></WordTrack>
        <Jump aria-label="Previous page"><svg width="6" height="8"><path d="M0 3.500 3 0l3 3.500zM0 7.500 3 4l3 3.500z" fill="#222" /></svg></Jump>
        <Jump aria-label="Browse"><svg width="6" height="6"><circle cx="3" cy="3" r="2.200" fill="none" stroke="#333" /></svg></Jump>
        <Jump aria-label="Next page"><svg width="6" height="8"><path d="M0 0h6L3 3.500zM0 4h6L3 7.500z" fill="#222" /></svg></Jump>
      </WordScroll>
    </Workspace>
    <StatusBar>
      <StatusItem>Page: 1 of 2</StatusItem><StatusItem>Words: 347</StatusItem>
      <StatusItem><svg width="12" height="12" viewBox="0 0 12 12"><path d="M1 5 6 3l5 4-5 4z" fill="#fff" stroke="#556a94" /><path d="m5 1 5 5M10 1 5 6" stroke="#d33" strokeWidth="1.500" /></svg></StatusItem>
      <StatusRight>
        <ViewGroup>
          {['page', 'book', 'web', 'multi', 'justify'].map((k, i) => <ViewButton key={k} $on={i === 0} aria-label={`View ${i + 1}`}><LinesIcon kind={k} w={10} c="#46648f" /></ViewButton>)}
        </ViewGroup>
        <ZoomLabel>88%</ZoomLabel>
        <button aria-label="Zoom out"><svg width="11" height="11"><circle cx="5.500" cy="5.500" r="4.800" fill="#e6effa" stroke="#5b7cae" /><path d="M3 5.500h5" stroke="#345" strokeWidth="1.300" /></svg></button>
        <ZoomRange type="range" min="0" max="100" defaultValue="44" aria-label="Zoom" />
        <button aria-label="Zoom in"><svg width="11" height="11"><circle cx="5.500" cy="5.500" r="4.800" fill="#e6effa" stroke="#5b7cae" /><path d="M3 5.500h5M5.500 3v5" stroke="#345" strokeWidth="1.300" /></svg></button>
      </StatusRight>
    </StatusBar>
  </WordColumn>
);

const ChatPanel = () => (
  <Chat>
    <Feed>
      <Messages>
        {chat.map(([initials, bg, from, text], i) => (
          <Message key={i}>
            <Sender>{from}<a href="#everyone">Everyone</a></Sender>
            <Avatar bg={bg}>{initials}</Avatar>
            <Bubble>{text}</Bubble>
          </Message>
        ))}
      </Messages>
      <ChatTrack><ChatThumb /></ChatTrack>
    </Feed>
    <Notice><Person />Who can see your messages? Recording On</Notice>
    <Compose>
      <ComposeHead><span>To:</span><span>Hosts and panelists</span><button type="button" aria-label="Emoji"><Smile /></button></ComposeHead>
      <ComposeText aria-label="Message" placeholder="Your text can only be seen by panelists" />
    </Compose>
  </Chat>
);

const innerApps = [
  ['Cortana', 42, <Ring />], ['Task View', 43, <TaskView s={16} />], ['Chrome', 41, <Chrome s={21} />, '#b8305a', 4], ['Edge', 41, <Edge />], ['Explorer', 41, <Folder s={20} />],
  ['Store', 41, <Store s={21} />], ['Gifts', 41, <Gift />], ['Mail', 40, <Mail />], ['Recorder', 40, <Rec s={21} />], ['Zoom', 38, <Zoom s={21} />, '#b8305a', 0, '#fafafa'],
  ['Snip', 42, <Snip s={22} />], ['VLC', 39, <Cone s={21} />, '#b8305a', 3], ['Telegram', 40, <Telegram />, '#b8305a', 4], ['Timer', 39, <PinkClock />, undefined, 0, '#ffb574'],
];
const outerApps = [
  ['Cortana', <Ring s={18} />], ['Task View', <TaskView />], ['Chrome', <Chrome s={25} user />, 4], ['Explorer', <Folder />, 4], ['Snip', <Snip />],
  ['Store', <Store s={23} />], ['Zoom', <Zoom s={23} />], ['Sticky Notes', <Note />], ['Recorder', <Rec />], ['VLC', <Cone s={23} />, 0, '#eff5f9'],
];

const RecordedTaskbar = () => (
  <InnerTaskbar>
    <Slot w={43} aria-label="Start"><WinLogo s={15} /></Slot>
    <SearchBox w={303} gap={9} size={12} face={WIDE_UI}><Lens s={15} /><input placeholder="Type here to search" aria-label="Recorded search" /></SearchBox>
    {innerApps.map(([name, w, icon, line, inset, bg]) => <Slot key={name} w={w} aria-label={name} line={line} inset={inset} bg={bg}>{icon}</Slot>)}
    <Tray size={10}>
      <TrayItem w={21} aria-label="More"><Chevron s={11} /></TrayItem>
      <TrayItem w={21} aria-label="Camera"><Camera /></TrayItem>
      <TrayItem w={21} aria-label="Recording"><Rec s={13} /></TrayItem>
      <TrayItem w={22} aria-label="Battery"><Battery /></TrayItem>
      <TrayItem w={22} aria-label="Sync"><Sync /></TrayItem>
      <TrayItem w={20} aria-label="Network"><Wifi c="#888" /></TrayItem>
      <TrayItem w={20} aria-label="Volume"><Speaker /></TrayItem>
      <TrayItem w={32}>ENG</TrayItem>
      <TrayItem w={63}>21:27<br />14-05-2022</TrayItem>
      <TrayItem w={43} aria-label="Notifications"><Speech s={14} /><Badge x={20} y={16}>1</Badge></TrayItem>
    </Tray>
  </InnerTaskbar>
);

const PlayerControls = () => (
  <Player>
    <SeekRow>
      <span>1:04:32</span><Seek type="range" min="0" max={DURATION} defaultValue={PLAYED} aria-label="Position" /><span>-1:05:31</span>
    </SeekRow>
    <ControlRow>
      <Control $size={30} aria-label="Play"><svg width="16" height="18"><path d="M1 1v16l14-8z" fill="#707070" /></svg></Control>
      <ControlSet>
        <Control aria-label="Previous"><svg width="16" height="12" fill="#707070"><path d="M0 1h2v10H0zM9 1v10L2.500 6zM15.500 1v10L9 6z" /></svg></Control>
        <Control aria-label="Stop"><svg width="10" height="10"><path d="M0 0h10v10H0z" fill="#707070" /></svg></Control>
        <Control aria-label="Next"><svg width="16" height="12" fill="#707070"><path d="M14 1h2v10h-2zM7 1v10l6.500-5zM.5 1v10L7 6z" /></svg></Control>
      </ControlSet>
      <ControlSet>
        <Control aria-label="Fullscreen"><svg width="18" height="14" fill="none" stroke="#707070" strokeWidth="2.200"><path d="M6 1.200H1.200V5M12 1.200h4.800V5M6 12.800H1.200V9M12 12.800h4.800V9" /></svg></Control>
        <Control aria-label="Effects"><svg width="16" height="14" fill="none" stroke="#707070" strokeWidth="2"><path d="M2.500 0v14M8 0v14M13.500 0v14M0 3h5M5.500 10.500h5M11 5.500h5" /></svg></Control>
      </ControlSet>
      <ControlSet>
        <Control aria-label="Playlist"><svg width="15" height="14" fill="none" stroke="#707070" strokeWidth="2"><path d="M0 1.500h14M0 6.500h14M0 11.500h8" /><path d="m10 8.500 4 3-4 3z" fill="#707070" stroke="none" /></svg></Control>
        <Control aria-label="Loop"><svg width="15" height="15" fill="none" stroke="#707070" strokeWidth="2"><path d="M1.500 7V3H12M13.500 8v4H3" /><path d="m10 0 4 3-4 3zM5 9l-4 3 4 3z" fill="#707070" stroke="none" /></svg></Control>
        <Control $on aria-label="Random"><svg width="15" height="15" fill="none" stroke="#6a7278" strokeWidth="2"><path d="M1 13 12 3M1 3l3.500 3M8 9l4 3.500" /><path d="M14 1v5L9 1zM14 14H9l5-5z" fill="#6a7278" stroke="none" /></svg></Control>
      </ControlSet>
      <Volume>
        <Speaker c="#707070" w="#f0922a" />
        <svg width="75" height="24" viewBox="0 0 75 24">
          <defs><linearGradient id="vol"><stop offset="0" stopColor="#8fdc8f" /><stop offset=".7" stopColor="#22c822" /><stop offset=".76" stopColor="#28cc18" /><stop offset=".85" stopColor="#f5c518" /><stop offset="1" stopColor="#ff3c14" /></linearGradient></defs>
          <path d="M1.500 21.500 73 1.500v20z" fill="url(#vol)" stroke="#777" strokeWidth="1.500" strokeLinejoin="round" />
        </svg>
        <VolumeText>125%</VolumeText>
      </Volume>
    </ControlRow>
  </Player>
);

export default function App() {
  return (
    <>
      <Global />
      <Shell>
        <TitleBar>
          <Cone s={14} />
          <AppTitle>2019 HK_CoreJava_14_05_2022_Exception handling.mp4 - VLC media player</AppTitle>
          <div>
            <WindowButton aria-label="Minimize"><svg width="10" height="10"><path d="M0 5.500h10" stroke="#000" /></svg></WindowButton>
            <WindowButton aria-label="Restore"><svg width="10" height="10" fill="none" stroke="#000"><path d="M.5 2.500h7v7h-7zM2.500 2V.5h7v7H8" /></svg></WindowButton>
            <WindowButton aria-label="Close"><svg width="10" height="10" stroke="#000"><path d="m0 0 10 10M10 0 0 10" /></svg></WindowButton>
          </div>
        </TitleBar>
        <MenuBar>
          {menus.map(([a, k, b]) => <button key={a + k + b}><span>{a}<u>{k}</u>{b}</span></button>)}
        </MenuBar>
        <Stage>
          <StageBody><Word /><ChatPanel /></StageBody>
          <MeetingStrip>
            <StripCell w={44} bg="#5a5a5a" /><StripCell w={25} bg="#777"><svg width="16" height="4"><path d="M0 0h16l-3 3H3z" fill="#aab8c6" /></svg></StripCell><StripCell w={69} bg="#000" />
            <StripCell w={25} bg="#999"><svg width="10" height="5"><path d="m2 0 6 4V0z" fill="#eee" /></svg></StripCell>
            <StripCell w={26}><svg width="10" height="5"><path d="M0 0h10v5H0z" fill="#5fa8cc" /></svg></StripCell>
            <StripCell w={26}><svg width="12" height="5"><path d="M0 0h12v3H0z" fill="#b9c3cf" /></svg></StripCell>
            <StripCell w={26}><svg width="8" height="5"><path d="M0 0h8L4 3z" fill="#ccc" /></svg></StripCell>
            <StripCell w={25}><svg width="8" height="5"><path d="M0 0h7L1 4z" fill="#eee" /></svg></StripCell>
            <StripCell w={26}><svg width="12" height="5"><path d="M0 0h12v2H0z" fill="#a5998a" /></svg></StripCell>
            <StripCell w={28}><svg width="12" height="5"><path d="M0 0h12L6 5z" fill="#9fb9bd" /></svg></StripCell>
          </MeetingStrip>
          <RecordedTaskbar />
        </Stage>
        <PlayerControls />
        <Taskbar>
          <Slot w={48} aria-label="Start"><WinLogo /></Slot>
          <SearchBox w={344} gap={12} size={14}><Lens /><input placeholder="Type here to search" aria-label="Search" /><Notebook /></SearchBox>
          {outerApps.map(([name, icon, inset, bg]) => <Slot key={name} w={49} aria-label={name} line={inset === undefined ? undefined : '#0078d7'} inset={inset} bg={bg}>{icon}</Slot>)}
          <Tray size={11}>
            <TrayItem w={24} aria-label="More"><Chevron /></TrayItem>
            <TrayItem w={25} aria-label="Plus"><svg width="16" height="16"><path d="M0 0h16v16H0z" fill="#1b6ac4" /><path d="M8 3v10M3 8h10" stroke="#fff" strokeWidth="1.500" /></svg></TrayItem>
            <TrayItem w={26} aria-label="Network"><Wifi /></TrayItem>
            <TrayItem w={32} lh={17}>ENG<br />IN</TrayItem>
            <TrayItem w={74} lh={17}>16:13<br />25-06-2022</TrayItem>
            <TrayItem w={46} aria-label="Notifications"><Speech /><Badge x={25} y={20}>2</Badge></TrayItem>
            <ShowDesktop aria-label="Show desktop" />
          </Tray>
        </Taskbar>
      </Shell>
    </>
  );
}
